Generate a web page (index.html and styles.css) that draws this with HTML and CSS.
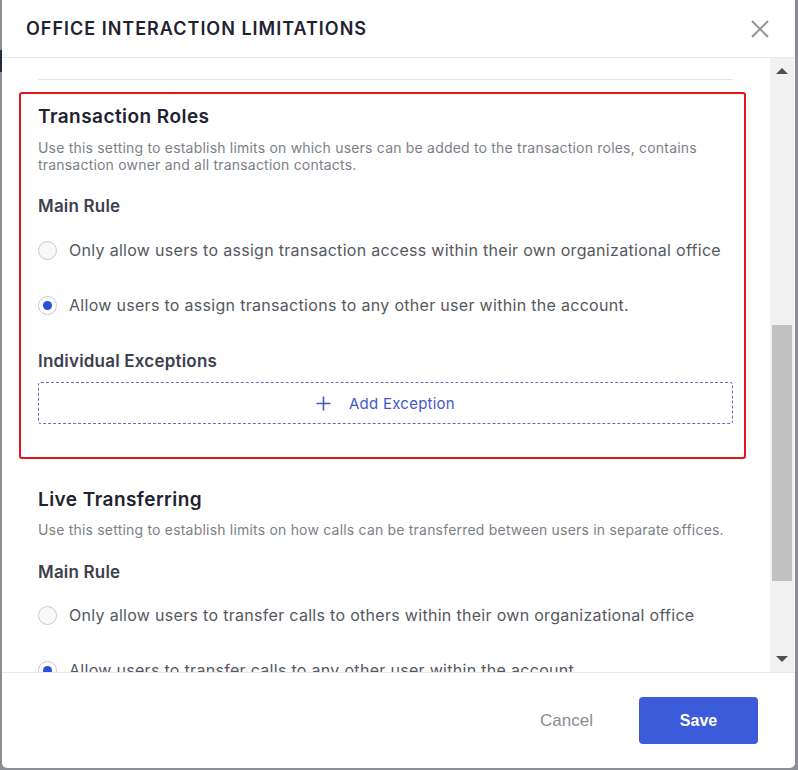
FILE: index.html
```html
<!DOCTYPE html>
<html lang="en">
<head>
    <meta charset="UTF-8">
    <title>Office Interaction Limitations</title>
    <link rel="stylesheet" href="styles.css">
</head>
<body>

    <div class="edge"><div class="edge-mark"></div></div>

    <div class="modal">
        <header class="modal-header">
            <h2 class="modal-title">OFFICE INTERACTION LIMITATIONS</h2>
            <button class="close-btn" aria-label="Close">
                <svg width="18" height="18" viewBox="0 0 18 18">
                    <path d="M1 1 L17 17 M17 1 L1 17" stroke="#8d8e93" stroke-width="1.8" fill="none"/>
                </svg>
            </button>
        </header>

        <div class="modal-body">
            <div class="body-content">
                <div class="prev-end"></div>

                <section class="setting highlighted">
                    <h3 class="setting-title">Transaction Roles</h3>
                    <p class="setting-desc">Use this setting to establish limits on which users can be added to the transaction roles, contains transaction owner and all transaction contacts.</p>

                    <h4 class="sub-title">Main Rule</h4>
                    <label class="radio-row">
                        <span class="radio"></span>
                        Only allow users to assign transaction access within their own organizational office
                    </label>
                    <label class="radio-row">
                        <span class="radio checked"></span>
                        Allow users to assign transactions to any other user within the account.
                    </label>

                    <h4 class="sub-title exceptions">Individual Exceptions</h4>
                    <button class="add-btn">
                        <svg width="15" height="15" viewBox="0 0 15 15">
                            <path d="M7.5 0.5 V14.5 M0.5 7.5 H14.5" stroke="#4259cc" stroke-width="1.6" fill="none"/>
                        </svg>
                        Add Exception
                    </button>
                </section>

                <section class="setting">
                    <h3 class="setting-title">Live Transferring</h3>
                    <p class="setting-desc">Use this setting to establish limits on how calls can be transferred between users in separate offices.</p>

                    <h4 class="sub-title">Main Rule</h4>
                    <label class="radio-row">
                        <span class="radio"></span>
                        Only allow users to transfer calls to others within their own organizational office
                    </label>
                    <label class="radio-row">
                        <span class="radio checked"></span>
                        Allow users to transfer calls to any other user within the account.
                    </label>
                </section>
            </div>

            <div class="scrollbar">
                <div class="sb-btn"><span class="arrow-up"></span></div>
                <div class="sb-track"><div class="sb-thumb"></div></div>
                <div class="sb-btn"><span class="arrow-down"></span></div>
            </div>
        </div>

        <footer class="modal-footer">
            <button class="cancel-btn">Cancel</button>
            <button class="save-btn">Save</button>
        </footer>
    </div>

</body>
</html>
```

FILE: styles.css
```css
body {
    margin: 0;
    height: 770px;
    overflow: hidden;
    display: flex;
    align-items: flex-start;
    background-color: #8b8c94;
    font-family: 'Inter', 'Liberation Sans', sans-serif;
}
.edge {
    width: 2px;
}
.edge-mark {
    margin-top: 50px;
    height: 22px;
    background: #1f2b47;
}
.modal {
    width: 793px;
    height: 768px;
    background: #fff;
    border-radius: 0 0 5px 5px;
    display: flex;
    flex-direction: column;
    overflow: hidden;
}

/* header */
.modal-header {
    height: 57px;
    flex-shrink: 0;
    border-bottom: 1px solid #e9e9ec;
    display: flex;
    align-items: center;
    justify-content: space-between;
    padding: 0 26px 0 24px;
}
.modal-title {
    margin: 0;
    font-size: 18px;
    font-weight: 600;
    letter-spacing: 1px;
    color: #1f2231;
}
.close-btn {
    border: none;
    background: none;
    padding: 0;
    width: 18px;
    height: 18px;
    cursor: pointer;
}

/* body */
.modal-body {
    flex: 1;
    min-height: 0;
    display: flex;
}
.body-content {
    flex: 1;
    overflow: hidden;
    padding: 0 37px 0 36px;
}
.prev-end {
    height: 21px;
    border-bottom: 1px solid #e7e7ea;
}
.setting-title {
    margin: 0;
    font-size: 19px;
    line-height: 24px;
    font-weight: 600;
    letter-spacing: 0.45px;
    color: #1f2231;
}
.setting-desc {
    margin: 10px 0 0;
    font-size: 14px;
    line-height: 17px;
    letter-spacing: 0.2px;
    color: #7c7f88;
}
.sub-title {
    margin: 23px 0 0;
    font-size: 17px;
    line-height: 20px;
    font-weight: 600;
    letter-spacing: 0.2px;
    color: #3c404e;
}
.radio-row {
    display: flex;
    align-items: center;
    height: 24px;
    margin-top: 22px;
    font-size: 16px;
    letter-spacing: 0.3px;
    color: #55585f;
}
.radio-row + .radio-row {
    margin-top: 31px;
}
.radio {
    width: 17px;
    height: 17px;
    border: 1px solid #c9cad0;
    border-radius: 50%;
    background: #f8f8fb;
    margin-right: 12px;
    flex-shrink: 0;
    display: flex;
    align-items: center;
    justify-content: center;
}
.radio.checked {
    background: #fff;
}
.radio.checked::after {
    content: "";
    width: 9px;
    height: 9px;
    border-radius: 50%;
    background: #2d4fd8;
}
.sub-title.exceptions {
    margin-top: 34px;
}
.add-btn {
    display: flex;
    align-items: center;
    justify-content: center;
    gap: 18px;
    width: 100%;
    height: 42px;
    margin-top: 11px;
    border: 1px dashed #5b6cc6;
    border-radius: 3px;
    background: #fff;
    font-family: inherit;
    font-size: 15px;
    letter-spacing: 0.25px;
    color: #4259cc;
    cursor: pointer;
}

.setting.highlighted {
    margin: 12px -13px 0 -19px;
    padding: 11px 11px 33px 17px;
    border: 2px solid #e3131b;
    border-radius: 3px;
}
.setting.highlighted + .setting {
    margin-top: 29px;
}
.setting.highlighted + .setting .setting-desc {
    margin-top: 9px;
}
.setting.highlighted + .setting .sub-title {
    margin-top: 24px;
}
.setting.highlighted + .setting .sub-title + .radio-row {
    margin-top: 21px;
}

/* scrollbar */
.scrollbar {
    width: 24px;
    margin-right: 1px;
    background: #f1f1f1;
    display: flex;
    flex-direction: column;
}
.sb-btn {
    height: 26px;
    display: flex;
    align-items: center;
    justify-content: center;
}
.arrow-up {
    border-left: 6px solid transparent;
    border-right: 6px solid transparent;
    border-bottom: 6px solid #505050;
}
.arrow-down {
    border-left: 6px solid transparent;
    border-right: 6px solid transparent;
    border-top: 6px solid #505050;
}
.sb-track {
    flex: 1;
    padding: 0 2px;
}
.sb-thumb {
    margin-top: 241px;
    height: 256px;
    background: #c1c1c1;
}

/* footer */
.modal-footer {
    height: 95px;
    flex-shrink: 0;
    border-top: 1px solid #e9e9ec;
    display: flex;
    align-items: center;
    justify-content: flex-end;
    padding-right: 37px;
}
.cancel-btn {
    border: none;
    background: none;
    font-family: 'Liberation Sans', Arial, sans-serif;
    font-size: 17px;
    color: #8a8d94;
    margin-right: 46px;
    padding: 0;
    cursor: pointer;
}
.save-btn {
    width: 119px;
    height: 47px;
    border: none;
    border-radius: 4px;
    background-color: #3b5bdb;
    color: #fff;
    font-family: 'Liberation Sans', Arial, sans-serif;
    font-size: 16px;
    font-weight: bold;
    cursor: pointer;
}
```
